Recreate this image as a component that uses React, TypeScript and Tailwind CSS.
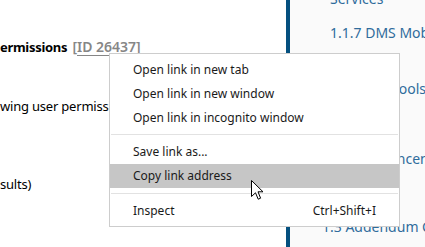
import { type ReactElement } from "react";

const FONT = { fontFamily: '"Noto Sans", "Open Sans", sans-serif' };

type MenuItem = { label: string; shortcut?: string; active?: boolean };

const topItems: MenuItem[] = [
  { label: "Open link in new tab" },
  { label: "Open link in new window" },
  { label: "Open link in incognito window" },
];

const midItems: MenuItem[] = [
  { label: "Save link as..." },
  { label: "Copy link address", active: true },
];

function MenuRow({ item }: { item: MenuItem }): ReactElement {
  return (
    <div
      className={`flex h-[24px] items-center justify-between pl-[23px] pr-[23px] text-[12px] text-[#1a1a1a] ${
        item.active ? "bg-[#c6c6c6]" : ""
      }`}
    >
      <span>{item.label}</span>
      {item.shortcut ? <span>{item.shortcut}</span> : null}
    </div>
  );
}

function Cursor(): ReactElement {
  return (
    <svg
      className="absolute left-[251px] top-[180px]"
      width="13"
      height="21"
      viewBox="0 0 13 21"
    >
      <path
        d="M0.5 0.5 L0.5 16.5 L4.5 12.8 L7.2 19.2 L9.6 18.2 L7 11.8 L12 11.8 Z"
        fill="#ffffff"
        stroke="#000000"
        strokeWidth="1"
        strokeLinejoin="miter"
      />
    </svg>
  );
}

export default function App(): ReactElement {
  return (
    <div
      className="relative flex h-[247px] w-[425px] overflow-hidden bg-white"
      style={FONT}
    >
      <main className="w-[286px] shrink-0 overflow-hidden text-[13px] tracking-[-0.2px] text-black">
        <p className="mt-[36px] whitespace-nowrap leading-[22px]">
          <span className="font-bold tracking-[-0.3px]">ermissions</span>{" "}
          <span className="ml-[2px] text-[14px] font-semibold tracking-normal text-[#868686]">
            [<span className="underline underline-offset-[3px]">ID 26437</span>]
          </span>
        </p>
        <p className="mt-[37px] whitespace-nowrap leading-[22px]">
          wing user permissions are required
        </p>
        <p className="mt-[56px] whitespace-nowrap leading-[22px]">sults)</p>
      </main>

      <div className="w-[4px] shrink-0 bg-[#04507f]" />

      <aside className="flex-1 overflow-hidden bg-[#fafafa] text-[14px] leading-[22px] text-[#2f6c9c]">
        <div className="-mt-[12px] pl-[40px]">
          <p className="whitespace-nowrap">Services</p>
          <p className="mt-[12px] whitespace-nowrap">1.1.7 DMS Mobile</p>
          <p className="mt-[2px] whitespace-nowrap">apps</p>
          <p className="mt-[10px] whitespace-nowrap">1.1.8 Dev tools</p>
          <p className="mt-[48px] whitespace-nowrap">1.2 Announcements</p>
        </div>
        <p className="ml-[32px] mt-[46px] whitespace-nowrap">
          1.3 Addendum CU
        </p>
      </aside>

      <div className="absolute left-[109px] top-[53px] h-[174px] w-[291px] border border-[#cdcdcd] bg-white pt-[4px] pb-[3px]">
        {topItems.map((item) => (
          <MenuRow item={item} key={item.label} />
        ))}
        <div className="mx-px mt-[4px] mb-[5px] h-px bg-[#e2e2e2]" />
        {midItems.map((item) => (
          <MenuRow item={item} key={item.label} />
        ))}
        <div className="mx-px my-[5px] h-px bg-[#e2e2e2]" />
        <MenuRow item={{ label: "Inspect", shortcut: "Ctrl+Shift+I" }} />
      </div>

      <Cursor />
    </div>
  );
}
